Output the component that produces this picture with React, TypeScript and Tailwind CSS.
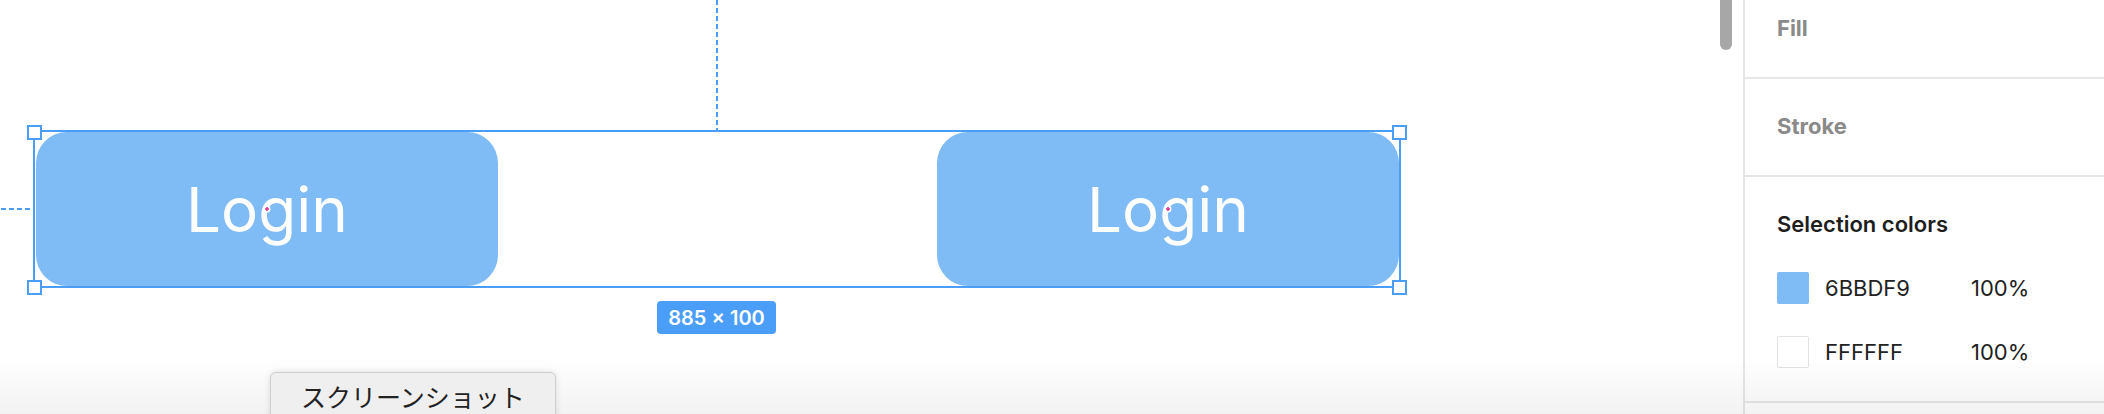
import React from "react";

const BLUE = "#4a9ef8";

function Handle({ x, y }: { x: number; y: number }) {
  return (
    <div
      className="absolute w-[15px] h-[15px] bg-white border-2 border-[#4a9ef8]"
      style={{ left: x, top: y }}
    />
  );
}

function LoginButton({ x }: { x: number }) {
  return (
    <div
      className="absolute top-[132px] w-[462px] h-[154px] rounded-[31px] bg-[#7fbbf5] flex items-center justify-center"
      style={{ left: x }}
    >
      <span className="text-white text-[62px] leading-none font-normal font-['Inter',sans-serif] mt-[2px]">
        Login
      </span>
      <svg
        className="absolute left-1/2 top-1/2 -translate-x-1/2 -translate-y-1/2"
        width="8"
        height="8"
        viewBox="0 0 8 8"
      >
        <circle cx="4" cy="4" r="3.5" fill="#ffffff" />
        <path d="M4 2V6M2 4H6" stroke="#e8358f" strokeWidth="1.6" />
      </svg>
    </div>
  );
}

export default function App() {
  return (
    <div className="relative w-[2104px] h-[414px] overflow-hidden bg-white flex font-['Inter',sans-serif]">
      {/* Canvas */}
      <div className="relative w-[1743px] h-full">
        {/* vertical dashed guide */}
        <svg className="absolute left-[716px] top-0" width="2" height="131">
          <line x1="1" y1="0" x2="1" y2="131" stroke={BLUE} strokeWidth="2" strokeDasharray="5 3" />
        </svg>
        {/* horizontal dashed guide */}
        <svg className="absolute left-0 top-[208px]" width="31" height="2">
          <line x1="1" y1="1" x2="31" y2="1" stroke={BLUE} strokeWidth="2" strokeDasharray="5 3" />
        </svg>

        <LoginButton x={36} />
        <LoginButton x={937} />

        {/* selection box */}
        <div className="absolute left-[33px] top-[130px] w-[1368px] h-[158px] border-2 border-[#4a9ef8]" />
        <Handle x={27} y={125} />
        <Handle x={1392} y={125} />
        <Handle x={27} y={280} />
        <Handle x={1392} y={280} />

        {/* size label */}
        <div className="absolute left-[657px] top-[301px] w-[119px] h-[33px] rounded-[4px] bg-[#4a9ef8] flex items-center justify-center text-white text-[20px] font-semibold leading-none">
          885 × 100
        </div>

        {/* scrollbar */}
        <div className="absolute right-[11px] top-[-10px] w-[12px] h-[60px] rounded-full bg-[#a7a7a7]" />
      </div>

      {/* Right panel */}
      <div className="w-[361px] h-full border-l-2 border-[#e6e6e6] flex flex-col">
        <div className="h-[79px] shrink-0 pl-[32px] pt-[14px] border-b-2 border-[#e6e6e6]">
          <div className="text-[22px] leading-[28px] font-bold text-[#8a8a8a]">Fill</div>
        </div>
        <div className="h-[98px] shrink-0 pl-[32px] pt-[33px] border-b-2 border-[#e6e6e6]">
          <div className="text-[22px] leading-[28px] font-bold text-[#8a8a8a]">Stroke</div>
        </div>
        <div className="h-[226px] shrink-0 pl-[32px] pt-[33px] border-b-2 border-[#e6e6e6] flex flex-col">
          <div className="text-[22px] leading-[28px] font-semibold text-[#1e1e1e]">Selection colors</div>
          <div className="mt-[34px] h-[32px] flex items-center">
            <div className="w-[32px] h-[32px] rounded-[2px] bg-[#7fbbf5]" />
            <div className="ml-[16px] w-[146px] text-[22px] text-[#222]">6BBDF9</div>
            <div className="text-[22px] text-[#222]">100%</div>
          </div>
          <div className="mt-[32px] h-[32px] flex items-center">
            <div className="w-[32px] h-[32px] rounded-[2px] bg-white border border-[#e2e2e2]" />
            <div className="ml-[16px] w-[146px] text-[22px] text-[#222]">FFFFFF</div>
            <div className="text-[22px] text-[#222]">100%</div>
          </div>
        </div>
      </div>

      {/* bottom shade overlay */}
      <div className="pointer-events-none absolute left-0 bottom-0 w-full h-[56px] bg-gradient-to-b from-[rgba(0,0,0,0)] to-[rgba(0,0,0,0.05)]" />

      {/* screenshot popup button */}
      <div className="absolute left-[270px] top-[372px] w-[286px] h-[60px] rounded-t-[6px] bg-[#efefef] border border-[#cfcfcf] shadow-[0_0_6px_rgba(0,0,0,0.12)] flex justify-center pt-[11px]">
        <span className="text-[25px] leading-[25px] text-[#222] font-['Noto_Sans_CJK_JP',sans-serif]">
          スクリーンショット
        </span>
      </div>
    </div>
  );
}
